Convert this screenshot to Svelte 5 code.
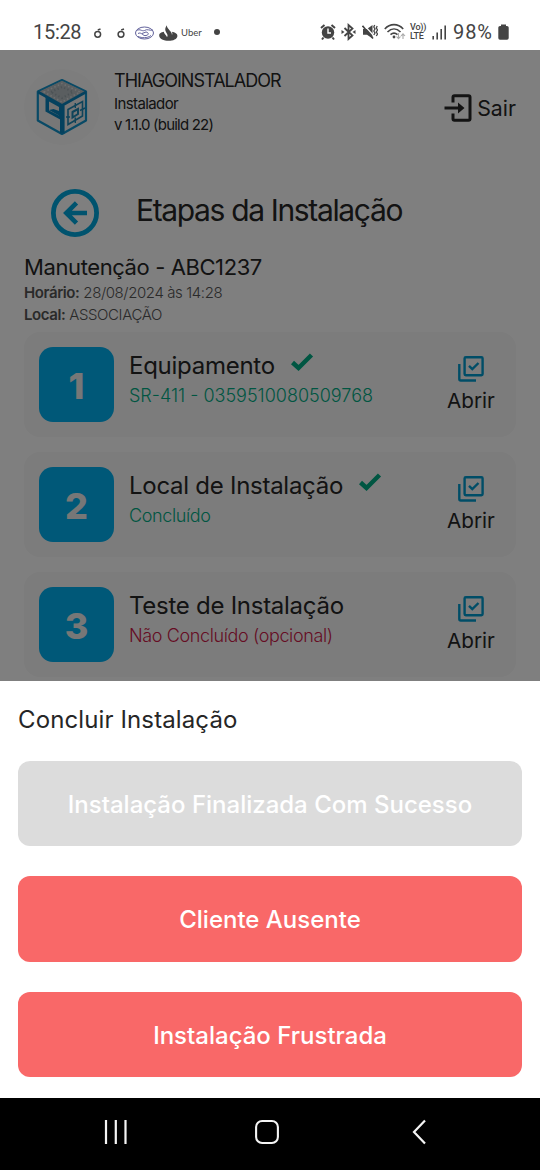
<script lang="ts">
  interface Step {
    id: number;
    title: string;
    detail: string;
    done: boolean;
  }

  const user = { name: 'THIAGOINSTALADOR', role: 'Instalador', version: 'v 1.1.0 (build 22)' };

  const steps: Step[] = [
    { id: 1, title: 'Equipamento', detail: 'SR-411 - 0359510080509768', done: true },
    { id: 2, title: 'Local de Instalação', detail: 'Concluído', done: true },
    { id: 3, title: 'Teste de Instalação', detail: 'Não Concluído (opcional)', done: false },
  ];

  const actions = [
    { label: 'Instalação Finalizada Com Sucesso', disabled: true },
    { label: 'Cliente Ausente', disabled: false },
    { label: 'Instalação Frustrada', disabled: false },
  ];
</script>

<div class="phone">
  <div class="status-bar">
    <span class="clock">15:28</span>
    <svg class="notifications" width="82" height="20" viewBox="0 0 82 20">
      <g fill="none" stroke="#444" stroke-width="1.5">
        <circle cx="4.7" cy="12.3" r="2.9" />
        <path d="M4.8 8 L7.5 7" />
        <circle cx="28" cy="12.3" r="2.9" />
        <path d="M28.2 8 L31 7" />
      </g>
      <g fill="none" stroke="#62629b" stroke-width="1">
        <ellipse cx="51.5" cy="11" rx="9" ry="6" />
        <path d="M43.5 8.5 C47.5 6.5 48.5 9.5 51.5 8.5 C54 6.5 57 9 60 8" />
        <path d="M45 11.5 C48.5 9.5 50 14.5 53 13.5 C56 13 56 10.5 53 10 L49 11.5" />
        <path d="M45 14.5 C49 16 54 16.5 58 13.5" />
      </g>
      <path fill="#444" d="M66.2 13.5 C66 11.5 68.5 10.2 70.8 9.8 C70.8 11.5 73 13 74 15 C75 14 74.5 12.5 73.5 11 C71.5 8 72 6 73.8 3.3 C74 7.5 79 9 79 13 C79.5 12 79.5 10.5 78.8 9.8 C82 10.5 84.4 11.5 84.4 14 C84.4 20.5 66.2 20.5 66.2 13.5 Z" />
    </svg>
    <span class="uber">Uber</span>
    <span class="dot"></span>

    <div class="indicators">
      <svg width="16" height="18" viewBox="0 0 16 18">
        <circle cx="8" cy="9.5" r="6.2" fill="#444" />
        <path d="M1 5 L4.5 2 M15 5 L11.5 2 M3.5 14.5 L2 16.5 M12.5 14.5 L14 16.5" stroke="#444" stroke-width="2" />
        <path d="M8 5.5 V10 H11" fill="none" stroke="#fff" stroke-width="1.4" />
      </svg>
      <svg class="bluetooth" width="15" height="18" viewBox="0 0 15 18">
        <path d="M3.5 5 L11.5 12.5 L7.5 16 V2 L11.5 5.5 L3.5 13" fill="none" stroke="#444" stroke-width="1.8" />
        <path d="M.5 7 L3.5 9 L.5 11 Z M14.5 7 L11.5 9 L14.5 11 Z" fill="#444" />
      </svg>
      <svg class="muted" width="16" height="18" viewBox="0 0 16 18">
        <path d="M1 6 H5 L10.5 2 V15.5 L5 11.8 H1 Z" fill="#444" />
        <path d="M1.5 1.5 L12 13" stroke="#fff" stroke-width="1.2" />
        <path d="M.5 2.8 L11 15.5" stroke="#444" stroke-width="1.6" />
        <path d="M12.7 2 L11.8 4 L13 6 L11.8 8 L13 10 L11.8 12 M15.2 3 L14.3 5 L15.5 7 L14.3 9 L15.5 11 L14.3 13" fill="none" stroke="#444" stroke-width="1.3" />
      </svg>
      <svg class="wifi" width="22" height="18" viewBox="0 0 22 18">
        <g fill="none" stroke="#444" stroke-width="1.6">
          <path d="M.8 6 C6 .2 14 .2 19.2 6" />
          <path d="M3.5 9 C7.5 5 12.5 5 16.5 9" />
          <path d="M6.5 11.7 C9 9.5 11 9.5 13.5 11.7" />
        </g>
        <circle cx="10" cy="14" r="1.4" fill="#444" />
        <path d="M14.5 10 V15.5 M12.5 13.5 L14.5 15.7 L16.5 13.5 M19 16 V11 M17 13 L19 10.8 L21 13" fill="none" stroke="#aaa" stroke-width="1.1" />
      </svg>
      <span class="volte"><span>Vo))</span><span>LTE</span></span>
      <svg class="signal" width="15" height="18" viewBox="0 0 15 18">
        <path d="M1.2 13 V16.5 M5.2 9.5 V16.5 M9.2 6 V16.5 M13.2 2.5 V16.5" stroke="#444" stroke-width="1.6" />
      </svg>
      <span class="percent">98%</span>
      <svg class="battery" width="11" height="18" viewBox="0 0 11 18">
        <path d="M3 1.5 H8 V3 H9 Q10.7 3 10.7 4.5 V15 Q10.7 16.8 9 16.8 H2 Q.3 16.8 .3 15 V4.5 Q.3 3 2 3 H3 Z" fill="#444" />
      </svg>
    </div>
  </div>

  <main class="screen">
    <header class="profile">
      <div class="logo">
        <svg width="54" height="60" viewBox="0 0 54 60">
          <path d="M27 3 L51 14.5 V43.5 L27 57 L2.8 43.5 V14.5 Z" fill="#eee" stroke="#1294cc" stroke-width="2.2" stroke-linejoin="round" />
          <path d="M27 3.8 L50 14.8 L27 28 L4 14.8 Z" fill="#b4bcc0" />
          <path d="M9 15 L27 6.5 L45 15 L27 25 Z" fill="none" stroke="#dcdfe0" stroke-width="1.6" stroke-dasharray="1.5 2.3" />
          <path d="M16 15 L27 10 L38 15 L27 21 Z" fill="none" stroke="#98a5ab" stroke-width="2" stroke-dasharray="1.2 2.4" />
          <path d="M3 15 L27 28.5 L51 15" fill="none" stroke="#0983bc" stroke-width="2.6" />
          <path d="M27.3 28.5 V56.5" stroke="#0983bc" stroke-width="4.6" />
          <path d="M10.5 20 L26 28.5 V43 L10.5 34.5 Z" fill="#0983bc" />
          <path d="M14 24.5 L24 30 V38.5 L14 33.5 Z" fill="#e4e4e4" />
          <path d="M14 33 L18.5 32 L24 34 V38.5 Z" fill="#0983bc" />
          <path d="M33 32.5 L47.5 24.5 V39 L33 47.5 Z" fill="none" stroke="#1f88b5" stroke-width="1.6" />
          <path d="M37.5 35 L43 32 V37 L37.5 40.5 Z" fill="none" stroke="#1f88b5" stroke-width="2" />
          <path d="M40.3 26 V31 M40.3 40.5 V46 M31 40 H35 M45 33.5 L50 31" stroke="#1f88b5" stroke-width="1.4" />
        </svg>
      </div>
      <div class="who">
        <div class="name">{user.name}</div>
        <div class="role">{user.role}</div>
        <div class="version">{user.version}</div>
      </div>
      <div class="logout">
        <svg width="28" height="28" viewBox="0 0 28 28">
          <path d="M9 8.5 V3.2 Q9 1.7 10.5 1.7 H24.5 Q26 1.7 26 3.2 V24.8 Q26 26.3 24.5 26.3 H10.5 Q9 26.3 9 24.8 V19.5" fill="none" stroke="#262626" stroke-width="3" />
          <path d="M.5 12.6 H14 V8.5 L20.5 14 L14 19.5 V15.4 H.5 Z" fill="#262626" />
        </svg>
        <span>Sair</span>
      </div>
    </header>

    <div class="heading">
      <svg width="48" height="48" viewBox="0 0 48 48" fill="none" stroke="#00a6dc">
        <circle cx="24" cy="24" r="21.6" stroke-width="4.8" />
        <path d="M36 24 H15 M25.5 13.8 L15.3 24 L25.5 34.2" stroke-width="4.6" />
      </svg>
      <h1>Etapas da Instalação</h1>
    </div>

    <div class="order">
      <div class="order-title">Manutenção - ABC1237</div>
      <div class="meta"><b>Horário:</b> 28/08/2024 às 14:28</div>
      <div class="meta"><b>Local:</b> ASSOCIAÇÃO</div>
    </div>

    <div class="steps">
      {#each steps as step (step.id)}
        <div class="step">
          <div class="number">{step.id}</div>
          <div class="info">
            <div class="step-title">
              <span>{step.title}</span>
              {#if step.done}
                <svg width="24" height="20" viewBox="0 0 24 20">
                  <path d="M2.5 10.5 L8.5 16 L21.5 3" fill="none" stroke="#00ac84" stroke-width="4.5" />
                </svg>
              {/if}
            </div>
            <div class="detail" class:serial={step.id === 1} class:pending={!step.done}>{step.detail}</div>
          </div>
          <div class="open">
            <svg width="26" height="26" viewBox="0 0 26 26" fill="none" stroke="#009bce" stroke-width="2.4">
              <rect x="6.6" y="1.2" width="18" height="18" rx="1.2" />
              <path d="M1.3 8 V23 Q1.3 24.5 2.8 24.5 H18" />
              <path d="M11 9.8 L14.3 13.1 L20.5 7" />
            </svg>
            <span>Abrir</span>
          </div>
        </div>
      {/each}
    </div>

    <div class="scrim"></div>
  </main>

  <section class="sheet">
    <h2>Concluir Instalação</h2>
    {#each actions as action}
      <button class="action" disabled={action.disabled}>{action.label}</button>
    {/each}
  </section>

  <nav class="nav-bar">
    <svg width="24" height="26" viewBox="0 0 24 26">
      <path d="M2 1 V25 M11.8 1 V25 M21.5 1 V25" stroke="#f4f4f4" stroke-width="2.2" />
    </svg>
    <svg class="home" width="24" height="26" viewBox="0 0 24 26">
      <rect x="1.1" y="2" width="21.8" height="22" rx="6" fill="none" stroke="#f4f4f4" stroke-width="2.1" />
    </svg>
    <svg width="16" height="26" viewBox="0 0 16 26">
      <path d="M14 1.5 L3 13 L14 24.5" fill="none" stroke="#f4f4f4" stroke-width="2.2" />
    </svg>
  </nav>
</div>

<style>
  :global(body) { background: #fff; }

  .phone {
    width: 540px;
    height: 1170px;
    display: flex;
    flex-direction: column;
    overflow: hidden;
    font-family: Inter, "Liberation Sans", sans-serif;
    color: #262626;
    white-space: nowrap;
  }
  svg { display: block; flex: none; }

  .status-bar {
    flex: 0 0 50px;
    box-sizing: border-box;
    padding: 14px 31px 0 33px;
    display: flex;
    align-items: center;
    background: #fff;
    color: #444;
  }
  .clock { font: 20px Roboto, sans-serif; letter-spacing: -0.3px; width: 60px; }
  .notifications { overflow: visible; }
  .uber { font: 9.5px Lato, sans-serif; margin-left: 6px; width: 20px; }
  .dot { width: 6px; height: 6px; border-radius: 50%; background: #444; margin-left: 13px; }
  .indicators { display: flex; align-items: center; margin-left: auto; }
  .bluetooth { margin-left: 5px; }
  .muted { margin-left: 6px; }
  .wifi { margin-left: 6px; }
  .volte {
    display: flex;
    flex-direction: column;
    margin-left: 4px;
    width: 17px;
    font: 500 9px/9px Roboto, sans-serif;
    letter-spacing: -0.2px;
  }
  .signal { margin-left: 5px; }
  .percent { font: 20px Roboto, sans-serif; letter-spacing: 0.9px; margin-left: 6px; width: 42px; }
  .battery { margin-left: 3px; }

  .screen {
    position: relative;
    flex: 0 0 631px;
    box-sizing: border-box;
    overflow: hidden;
    padding: 19px 24px 0;
    background: #fff;
  }
  .scrim {
    position: absolute;
    inset: 0;
    background: rgba(0, 0, 0, 0.5);
  }

  .profile { display: flex; height: 78px; }
  .logo {
    width: 76px;
    height: 76px;
    border-radius: 50%;
    background: #fafafa;
    display: flex;
    align-items: center;
    justify-content: center;
  }
  .who { margin-left: 14px; }
  .name { font-size: 18px; line-height: 24px; letter-spacing: -0.97px; }
  .role { font-size: 15px; line-height: 21px; letter-spacing: -0.6px; }
  .version { font-size: 15px; line-height: 22px; letter-spacing: -0.8px; }
  .logout {
    display: flex;
    align-items: center;
    gap: 5px;
    margin-left: auto;
    font-size: 21.3px;
  }

  .heading { display: flex; align-items: center; height: 48px; margin-top: 42px; padding-left: 27px; }
  h1 {
    margin: -6px 0 0 37px;
    font-size: 30px;
    font-weight: 400;
    letter-spacing: -1.35px;
  }

  .order { height: 95px; box-sizing: border-box; padding-top: 16px; }
  .order-title { font-size: 22px; line-height: 29px; letter-spacing: -0.4px; }
  .meta { font-size: 15px; line-height: 21.5px; letter-spacing: -0.4px; color: #555; font-weight: 300; }
  .order b { font-weight: 600; }

  .steps { display: flex; flex-direction: column; gap: 15px; }
  .step {
    display: flex;
    height: 105px;
    box-sizing: border-box;
    padding: 15px;
    border-radius: 16px;
    background: #f8f8f8;
  }
  .number {
    width: 75px;
    height: 75px;
    box-sizing: border-box;
    padding-top: 2px;
    border-radius: 14px;
    background: #00b0f0;
    color: #eee;
    display: flex;
    align-items: center;
    justify-content: center;
    font-size: 36px;
    font-weight: 800;
  }
  .info { margin-left: 15px; }
  .step-title { display: flex; gap: 15px; font-size: 24px; line-height: 37px; letter-spacing: -0.27px; }
  .step-title svg { margin-top: 5px; }
  .detail { font-size: 18px; line-height: 24px; letter-spacing: -0.38px; font-weight: 300; color: #00ac84; }
  .detail.serial { letter-spacing: 0; }
  .detail.pending { color: #cc1849; }
  .open {
    width: 60px;
    margin: 9px 0 0 auto;
    display: flex;
    flex-direction: column;
    align-items: center;
    font-size: 20.7px;
    line-height: 37px;
  }

  .sheet {
    flex: 0 0 417px;
    box-sizing: border-box;
    padding: 24px 18px 0;
    display: flex;
    flex-direction: column;
    gap: 30px;
    background: #fff;
  }
  h2 { margin: 0 0 -4.5px; font-size: 24px; line-height: 30px; font-weight: 400; letter-spacing: 0.12px; }
  .action {
    flex: none;
    height: 85.5px;
    padding-top: 3px;
    border: none;
    border-radius: 12px;
    background: #f96868;
    color: #fff;
    font: 500 24px Inter, "Liberation Sans", sans-serif;
  }
  .action:disabled { background: #dcdcdc; }

  .nav-bar {
    flex: 0 0 72px;
    box-sizing: border-box;
    padding: 0 113px 4px 104px;
    display: flex;
    align-items: center;
    justify-content: space-between;
    background: #000;
  }
  .home { margin-right: 5px; }
</style>
